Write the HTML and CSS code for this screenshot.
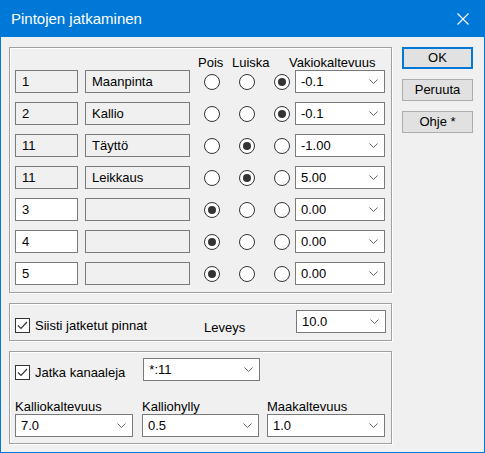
FILE: index.html
```html
<!DOCTYPE html>
<html>
<head>
<meta charset="utf-8">
<link rel="stylesheet" href="styles.css">
</head>
<body>
<div class="window">
  <div class="titlebar">
    <span class="title">Pintojen jatkaminen</span>
    <svg class="close" width="12" height="12" viewBox="0 0 12 12"><path d="M0.5 0.5 L11.5 11.5 M11.5 0.5 L0.5 11.5" stroke="#fff" stroke-width="1.1" fill="none"/></svg>
  </div>
  <div class="content">
    <div class="leftcol">
      <div class="group g1">
        <div class="header">
          <span class="h-pois">Pois</span>
          <span class="h-luiska">Luiska</span>
          <span class="h-vakio">Vakiokaltevuus</span>
        </div>
        <div class="rows">
          <div class="row">
            <div class="field id ro">1</div>
            <div class="field name ro">Maanpinta</div>
            <span class="radio r1"></span><span class="radio r2"></span><span class="radio r3 on"></span>
            <div class="combo c-row"><span>-0.1</span><svg class="chev" width="9" height="5" viewBox="0 0 9 5"><path d="M0.5 0.5 L4.5 4.5 L8.5 0.5" stroke="#666" fill="none"/></svg></div>
          </div>
          <div class="row">
            <div class="field id ro">2</div>
            <div class="field name ro">Kallio</div>
            <span class="radio r1"></span><span class="radio r2"></span><span class="radio r3 on"></span>
            <div class="combo c-row"><span>-0.1</span><svg class="chev" width="9" height="5" viewBox="0 0 9 5"><path d="M0.5 0.5 L4.5 4.5 L8.5 0.5" stroke="#666" fill="none"/></svg></div>
          </div>
          <div class="row">
            <div class="field id ro">11</div>
            <div class="field name ro">Täyttö</div>
            <span class="radio r1"></span><span class="radio r2 on"></span><span class="radio r3"></span>
            <div class="combo c-row"><span>-1.00</span><svg class="chev" width="9" height="5" viewBox="0 0 9 5"><path d="M0.5 0.5 L4.5 4.5 L8.5 0.5" stroke="#666" fill="none"/></svg></div>
          </div>
          <div class="row">
            <div class="field id ro">11</div>
            <div class="field name ro">Leikkaus</div>
            <span class="radio r1"></span><span class="radio r2 on"></span><span class="radio r3"></span>
            <div class="combo c-row"><span>5.00</span><svg class="chev" width="9" height="5" viewBox="0 0 9 5"><path d="M0.5 0.5 L4.5 4.5 L8.5 0.5" stroke="#666" fill="none"/></svg></div>
          </div>
          <div class="row">
            <div class="field id">3</div>
            <div class="field name ro"></div>
            <span class="radio r1 on"></span><span class="radio r2"></span><span class="radio r3"></span>
            <div class="combo c-row"><span>0.00</span><svg class="chev" width="9" height="5" viewBox="0 0 9 5"><path d="M0.5 0.5 L4.5 4.5 L8.5 0.5" stroke="#666" fill="none"/></svg></div>
          </div>
          <div class="row">
            <div class="field id">4</div>
            <div class="field name ro"></div>
            <span class="radio r1 on"></span><span class="radio r2"></span><span class="radio r3"></span>
            <div class="combo c-row"><span>0.00</span><svg class="chev" width="9" height="5" viewBox="0 0 9 5"><path d="M0.5 0.5 L4.5 4.5 L8.5 0.5" stroke="#666" fill="none"/></svg></div>
          </div>
          <div class="row">
            <div class="field id">5</div>
            <div class="field name ro"></div>
            <span class="radio r1 on"></span><span class="radio r2"></span><span class="radio r3"></span>
            <div class="combo c-row"><span>0.00</span><svg class="chev" width="9" height="5" viewBox="0 0 9 5"><path d="M0.5 0.5 L4.5 4.5 L8.5 0.5" stroke="#666" fill="none"/></svg></div>
          </div>
        </div>
      </div>

      <div class="group g2">
        <span class="check"><svg width="13" height="13" viewBox="0 0 13 13"><path d="M2 6.5 L5 9.5 L11 3" stroke="#333" stroke-width="1.2" fill="none"/></svg></span>
        <span class="cb-label">Siisti jatketut pinnat</span>
        <span class="leveys">Leveys</span>
        <div class="combo c-leveys"><span>10.0</span><svg class="chev" width="9" height="5" viewBox="0 0 9 5"><path d="M0.5 0.5 L4.5 4.5 L8.5 0.5" stroke="#666" fill="none"/></svg></div>
      </div>

      <div class="group g3">
        <div class="g3-top">
          <span class="check"><svg width="13" height="13" viewBox="0 0 13 13"><path d="M2 6.5 L5 9.5 L11 3" stroke="#333" stroke-width="1.2" fill="none"/></svg></span>
          <span class="cb-label">Jatka kanaaleja</span>
          <div class="combo c-kan"><span>*:11</span><svg class="chev" width="9" height="5" viewBox="0 0 9 5"><path d="M0.5 0.5 L4.5 4.5 L8.5 0.5" stroke="#666" fill="none"/></svg></div>
        </div>
        <div class="g3-bottom">
          <div class="col col-a">
            <div class="lbl">Kalliokaltevuus</div>
            <div class="combo c-b"><span>7.0</span><svg class="chev" width="9" height="5" viewBox="0 0 9 5"><path d="M0.5 0.5 L4.5 4.5 L8.5 0.5" stroke="#666" fill="none"/></svg></div>
          </div>
          <div class="col col-b">
            <div class="lbl">Kalliohylly</div>
            <div class="combo c-b"><span>0.5</span><svg class="chev" width="9" height="5" viewBox="0 0 9 5"><path d="M0.5 0.5 L4.5 4.5 L8.5 0.5" stroke="#666" fill="none"/></svg></div>
          </div>
          <div class="col col-c">
            <div class="lbl">Maakaltevuus</div>
            <div class="combo c-b"><span>1.0</span><svg class="chev" width="9" height="5" viewBox="0 0 9 5"><path d="M0.5 0.5 L4.5 4.5 L8.5 0.5" stroke="#666" fill="none"/></svg></div>
          </div>
        </div>
      </div>
    </div>

    <div class="buttons">
      <div class="btn default">OK</div>
      <div class="btn">Peruuta</div>
      <div class="btn">Ohje *</div>
    </div>
  </div>
</div>
</body>
</html>
```

FILE: styles.css
```css
* { box-sizing: border-box; }
html, body { margin: 0; padding: 0; background: #f0f0f0; }
body {
  font-family: "Liberation Sans", Arial, sans-serif;
  font-size: 13px;
  color: #000;
}
.window {
  width: 485px;
  height: 453px;
  border: 1px solid #0078d7;
  border-top: none;
  background: #f0f0f0;
  overflow: hidden;
}
.titlebar {
  height: 37px;
  margin: 0 -1px;
  background: #0078d7;
  color: #fff;
  display: flex;
  align-items: center;
  justify-content: space-between;
  padding: 1px 0 0 11px;
}
.title { font-size: 15px; line-height: 18px; }
.close { margin-right: 16px; }

.content {
  display: flex;
  align-items: flex-start;
  padding: 10px 0 0 8px;
}
.leftcol {
  width: 383px;
  display: flex;
  flex-direction: column;
  gap: 10px;
}
.group {
  border: 1px solid #a0a0a0;
  box-shadow: 1px 1px 0 #fff, inset 1px 1px 0 #fff;
}
.g1 {
  height: 246px;
  padding: 7px 5px 7px 5px;
}
.header {
  display: flex;
  height: 15px;
  line-height: 15px;
}
.h-pois { margin-left: 183px; width: 34px; }
.h-luiska { width: 57px; }
.h-vakio { }

.rows { display: flex; flex-direction: column; gap: 9px; }
.row { display: flex; align-items: center; height: 23px; }

.field {
  height: 23px;
  border: 1px solid #7a7a7a;
  background: #fff;
  line-height: 21px;
  padding-left: 6px;
  white-space: nowrap;
}
.field.ro { background: #f0f0f0; }
.id { width: 63px; }
.name { width: 105px; margin-left: 7px; }

.radio {
  width: 16px;
  height: 16px;
  border: 1px solid #333;
  border-radius: 50%;
  background: #fff;
  display: flex;
  align-items: center;
  justify-content: center;
  flex: none;
}
.radio.on::after {
  content: "";
  width: 8px;
  height: 8px;
  border-radius: 50%;
  background: #333;
}
.r1 { margin-left: 14px; }
.r2 { margin-left: 19px; }
.r3 { margin-left: 19px; }

.combo {
  height: 23px;
  border: 1px solid #7a7a7a;
  background: #fff;
  display: flex;
  align-items: center;
  justify-content: space-between;
  padding: 0 6px 0 5px;
  line-height: 21px;
  flex: none;
}
.chev { display: block; }
.c-row { width: 90px; margin-left: 5px; }

.g2 {
  height: 38px;
  display: flex;
  align-items: flex-start;
  padding: 6px 5px 0 5px;
}
.check {
  width: 15px;
  height: 15px;
  border: 1px solid #333;
  background: #fff;
  display: flex;
  align-items: center;
  justify-content: center;
  flex: none;
}
.g2 .check { margin-top: 8px; }
.cb-label { margin-left: 5px; line-height: 15px; }
.g2 .cb-label { margin-top: 8px; }
.leveys { margin-left: 57px; margin-top: 10px; line-height: 15px; }
.c-leveys { width: 90px; margin-left: auto; }

.g3 {
  height: 93px;
  padding: 6px 5px 6px 5px;
}
.g3-top { display: flex; align-items: flex-start; }
.g3-top .check { margin-top: 7px; }
.g3-top .cb-label { margin-top: 7px; }
.c-kan { width: 117px; margin-left: 18px; }
.g3-bottom { display: flex; margin-top: 18px; }
.col { display: flex; flex-direction: column; }
.lbl { line-height: 15px; height: 15px; }
.c-b { width: 118px; }
.col-b { margin-left: 9px; }
.col-c { margin-left: 8px; }
.col-b .c-b { width: 117px; }

.buttons {
  margin-left: 10px;
  display: flex;
  flex-direction: column;
  gap: 10px;
}
.btn {
  width: 71px;
  height: 22px;
  background: #e1e1e1;
  border: 1px solid #adadad;
  text-align: center;
  line-height: 20px;
}
.btn.default {
  border: 2px solid #0078d7;
  line-height: 18px;
}
```
